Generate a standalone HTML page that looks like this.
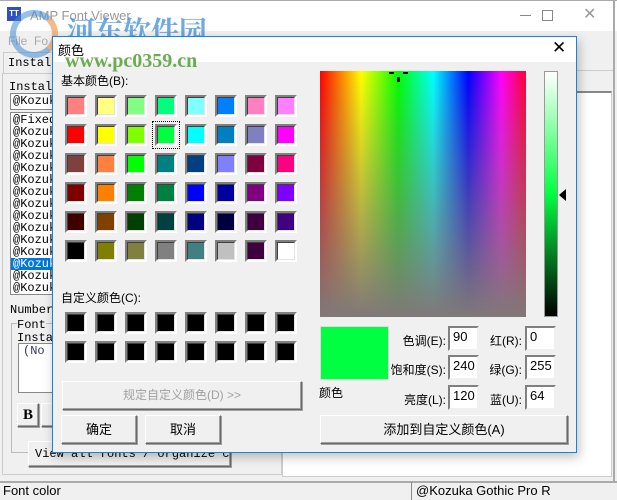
<!DOCTYPE html>
<html><head><meta charset="utf-8"><style>
*{box-sizing:border-box;margin:0;padding:0}
body{width:617px;height:500px;overflow:hidden;background:#f0f0f0;position:relative;font-family:"Liberation Sans","Noto Sans CJK SC",sans-serif;font-size:12px}
.a{position:absolute;white-space:nowrap}
.mono{font-family:"Liberation Mono","DejaVu Sans Mono",monospace;font-size:12px}
.sw{position:absolute;width:22px;height:22px;border:2px solid;border-color:#808080 #fff #fff #808080}
.sw i{display:block;width:100%;height:100%;border:1px solid;border-color:#404040 #e3e3e3 #e3e3e3 #404040}
.btn{position:absolute;white-space:nowrap;overflow:hidden;background:#f0f0f0;border:1px solid;border-color:#fff #696969 #696969 #fff;box-shadow:1px 1px 0 #a0a0a0 ,inset -1px -1px 0 #a0a0a0;text-align:center;font-size:13px;color:#000}
.inp{position:absolute;width:31px;height:25px;background:#fff;border:2px solid;border-color:#808080 #f0f0f0 #f0f0f0 #808080;font-size:13px;padding:1px 0 0 3px}
.lbl{position:absolute;font-size:12px;text-align:right;white-space:nowrap}
</style></head><body>
<!-- main window -->
<div class="a" style="left:0;top:0;width:617px;height:31px;background:#fff;border-top:1px solid #aaa"></div>
<div class="a" style="left:7px;top:7px;width:14px;height:14px;background:#3050c0;color:#fff;font-size:8px;font-weight:bold;line-height:14px;text-align:center">TT</div>
<div class="a" style="left:30px;top:8px;color:#999;font-size:13px">AMP Font Viewer</div>
<div class="a" style="left:520px;top:15px;width:11px;height:1px;background:#888"></div>
<div class="a" style="left:542px;top:10px;width:11px;height:11px;border:1px solid #888"></div>
<div class="a" style="left:583px;top:4px;font-size:16px;color:#999">✕</div>
<div class="a" style="left:613px;top:0;width:2px;height:482px;background:#aaa"></div>
<div class="a" style="left:0;top:31px;width:613px;height:20px;background:#f0f0f0;color:#aaa;font-size:12px;padding:3px 8px">File &nbsp;Fo</div>
<div class="a" style="left:3px;top:52px;width:55px;height:22px;border:1px solid #ccc;border-bottom:none;background:#f0f0f0"></div>
<div class="a mono" style="left:8px;top:56px">Install</div>
<div class="a" style="left:2px;top:73px;width:280px;height:402px;border:1px solid #ccc"></div>
<div class="a mono" style="left:9px;top:80px">Install</div>
<div class="a mono" style="left:10px;top:93px;width:50px;height:17px;background:#fff;border:1px solid #888;padding-left:2px;overflow:hidden">@Kozuka</div>
<div class="a mono" style="left:10px;top:112px;width:50px;height:183px;background:#fff;border:1px solid #888;padding-left:2px;line-height:12px;padding-top:1px;overflow:hidden">@Fixeds<br>@Kozuka<br>@Kozuka<br>@Kozuka<br>@Kozuka<br>@Kozuka<br>@Kozuka<br>@Kozuka<br>@Kozuka<br>@Kozuka<br>@Kozuka<br>@Kozuka<br><span style="background:#0078d7;color:#fff;display:block;margin-left:-2px;padding-left:2px">@Kozuka</span>@Kozuka<br>@Kozuka</div>
<div class="a mono" style="left:10px;top:303px">Number</div>
<div class="a" style="left:11px;top:323px;width:48px;height:130px;border:1px solid #bbb"></div>
<div class="a mono" style="left:17px;top:318px;background:#f0f0f0">Font</div>
<div class="a mono" style="left:17px;top:331px">Instal</div>
<div class="a mono" style="left:18px;top:343px;width:42px;height:50px;background:#fff;border:1px solid #888;color:#336;padding-left:4px;overflow:hidden">(No T</div>
<div class="btn" style="left:17px;top:403px;width:22px;height:24px;font-weight:bold;font-family:'Liberation Serif',serif;font-size:15px;line-height:22px">B</div>
<div class="btn" style="left:41px;top:403px;width:22px;height:24px"></div>
<div class="btn mono" style="left:28px;top:441px;width:203px;height:26px;line-height:24px;text-align:left;padding-left:6px;font-size:12px">View all fonts / organize categor</div>
<div class="a" style="left:282px;top:70px;width:331px;height:22px;background:#f0f0f0;border-top:1px solid #ccc"></div>
<div class="a" style="left:282px;top:91px;width:330px;height:386px;background:#fff;border:1px solid #ccc;border-top:2px solid #888"></div>
<div class="a" style="left:0;top:481px;width:617px;height:19px;background:#f0f0f0;border-top:2px solid #aaa"></div>
<div class="a" style="left:3px;top:483px;font-size:13px">Font color</div>
<div class="a" style="left:411px;top:482px;width:1px;height:18px;background:#888"></div>
<div class="a" style="left:416px;top:483px;font-size:13px">@Kozuka Gothic Pro R</div>
<!-- watermark -->
<div class="a" style="left:10px;top:10px;width:48px;height:48px;border-radius:50%;border:6px solid rgba(70,140,210,.55);border-right-color:rgba(240,140,60,.6)"></div>
<div class="a" style="left:67px;top:10px;font-size:28px;font-weight:bold;color:rgba(60,140,220,.75);font-family:'Noto Serif CJK SC',serif">河东软件园</div>
<!-- dialog -->
<div class="a" style="left:52px;top:36px;width:525px;height:417px;background:#f0f0f0;border:1px solid #1883d7;box-shadow:2px 4px 10px rgba(0,0,0,.25)"></div>
<div class="a" style="left:53px;top:37px;width:523px;height:25px;background:#fff"></div>
<div class="a" style="left:58px;top:40px;font-size:13px">颜色</div>
<div class="a" style="left:552px;top:38px;font-size:17px">✕</div>
<div class="a" style="left:65px;top:50px;font-size:20px;font-weight:bold;color:rgba(80,160,50,.85);font-family:'Liberation Serif',serif">www.pc0359.cn</div>
<div class="a" style="left:61px;top:72px;font-size:12px">基本颜色(B):</div>
<div class="a" style="left:61px;top:289px;font-size:12px">自定义颜色(C):</div>
<div id="sw"></div>
<div class="a" style="left:152px;top:121px;width:28px;height:28px;border:1px dotted #000"></div>
<div class="btn" style="left:62px;top:381px;width:240px;height:29px;line-height:27px;color:#a0a0a0;font-size:12px">规定自定义颜色(D) &gt;&gt;</div>
<div class="btn" style="left:61px;top:415px;width:76px;height:29px;line-height:27px">确定</div>
<div class="btn" style="left:145px;top:415px;width:76px;height:29px;line-height:27px">取消</div>
<div class="a" style="left:320px;top:71px;width:206px;height:246px;background:linear-gradient(to bottom,rgba(128,128,128,0),#807878),linear-gradient(to right,#f00,#ff0 20%,#0f0 38%,#0ff 55%,#00f 72%,#f0f 88%,#f03)"></div>
<div class="a" style="left:389px;top:72px;width:5px;height:2px;background:#000"></div>
<div class="a" style="left:403px;top:72px;width:5px;height:2px;background:#000"></div>
<div class="a" style="left:397px;top:77px;width:3px;height:5px;background:#000"></div>
<div class="a" style="left:544px;top:71px;width:14px;height:246px;border:1px solid #999;background:linear-gradient(#fff,#00ff40 50%,#000)"></div>
<div class="a" style="left:559px;top:189px;width:0;height:0;border-top:6px solid transparent;border-bottom:6px solid transparent;border-right:7px solid #000"></div>
<div class="a" style="left:320px;top:326px;width:69px;height:54px;background:#00ff40;border:1px solid #ddd"></div>
<div class="a" style="left:319px;top:384px;font-size:12px">颜色</div>
<div class="lbl" style="left:380px;top:332px;width:66px">色调(E):</div>
<div class="lbl" style="left:380px;top:361px;width:66px">饱和度(S):</div>
<div class="lbl" style="left:380px;top:391px;width:66px">亮度(L):</div>
<div class="lbl" style="left:480px;top:332px;width:42px">红(R):</div>
<div class="lbl" style="left:480px;top:361px;width:42px">绿(G):</div>
<div class="lbl" style="left:480px;top:391px;width:42px">蓝(U):</div>
<div class="inp" style="left:448px;top:326px">90</div>
<div class="inp" style="left:448px;top:355px">240</div>
<div class="inp" style="left:448px;top:385px">120</div>
<div class="inp" style="left:525px;top:326px">0</div>
<div class="inp" style="left:525px;top:355px">255</div>
<div class="inp" style="left:525px;top:385px">64</div>
<div class="btn" style="left:320px;top:415px;width:248px;height:29px;line-height:27px">添加到自定义颜色(A)</div>
<script>
var c=[["#ff8080","#ffff80","#80ff80","#00ff80","#80ffff","#0080ff","#ff80c0","#ff80ff"],
["#ff0000","#ffff00","#80ff00","#00ff40","#00ffff","#0080c0","#8080c0","#ff00ff"],
["#804040","#ff8040","#00ff00","#008080","#004080","#8080ff","#800040","#ff0080"],
["#800000","#ff8000","#008000","#008040","#0000ff","#0000a0","#800080","#8000ff"],
["#400000","#804000","#004000","#004040","#000080","#000040","#400040","#400080"],
["#000000","#808000","#808040","#808080","#408080","#c0c0c0","#400040","#ffffff"]];
var ys=[95,124,153,182,211,240],h="";
for(var r=0;r<6;r++)for(var i=0;i<8;i++)h+='<div class="sw" style="left:'+(65+30*i)+'px;top:'+ys[r]+'px"><i style="background:'+c[r][i]+'"></i></div>';
[312,341].forEach(function(y){for(var i=0;i<8;i++)h+='<div class="sw" style="left:'+(65+30*i)+'px;top:'+y+'px"><i style="background:#000"></i></div>';});
document.getElementById("sw").outerHTML=h;
</script>
</body></html>
